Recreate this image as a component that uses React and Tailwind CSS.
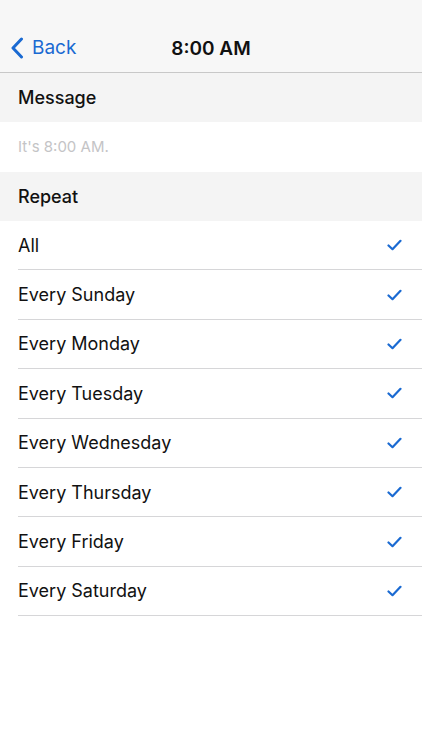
import React from 'react';

const days = [
  'All',
  'Every Sunday',
  'Every Monday',
  'Every Tuesday',
  'Every Wednesday',
  'Every Thursday',
  'Every Friday',
  'Every Saturday',
];

function Check() {
  return (
    <svg width="15" height="12" viewBox="0 0 15 12" fill="none">
      <path d="M1.5 6.5 L5.5 10.2 L13.5 1.8" stroke="#1a6ad2" strokeWidth="2.2" strokeLinecap="round" strokeLinejoin="round" />
    </svg>
  );
}

export default function App() {
  return (
    <main className="min-h-[750px] bg-white text-[#111] font-['Inter',sans-serif]">
      {/* Nav */}
      <header className="relative flex h-[73px] items-end border-b border-[#c8c8c8] bg-[#f7f7f7] pb-[10px]">
        <button className="flex items-center pl-[10px] text-[19px] text-[#1a6ad2]">
          <svg width="14" height="22" viewBox="0 0 14 22" fill="none" className="mr-[8px]">
            <path d="M11.5 2 L3 11 L11.5 20" stroke="#1a6ad2" strokeWidth="3" strokeLinecap="round" strokeLinejoin="round" />
          </svg>
          Back
        </button>
        <h1 className="absolute bottom-[10px] left-0 right-0 text-center text-[19px] font-semibold leading-[26px]">
          8:00 AM
        </h1>
      </header>

      <div className="flex h-[49px] items-center bg-[#f4f4f4] px-[18px] text-[18px] font-medium">Message</div>
      <div className="flex h-[50px] items-center bg-white px-[18px] text-[15px] text-[#c4c4c6]">It's 8:00 AM.</div>
      <div className="flex h-[49px] items-center bg-[#f4f4f4] px-[18px] text-[18px] font-medium">Repeat</div>

      <ul className="pl-[18px]">
        {days.map((d) => (
          <li key={d} className="flex h-[49.4px] items-center justify-between border-b border-[#d6d6d8] pr-[20px] text-[18px]">
            <span>{d}</span>
            <Check />
          </li>
        ))}
      </ul>
    </main>
  );
}
